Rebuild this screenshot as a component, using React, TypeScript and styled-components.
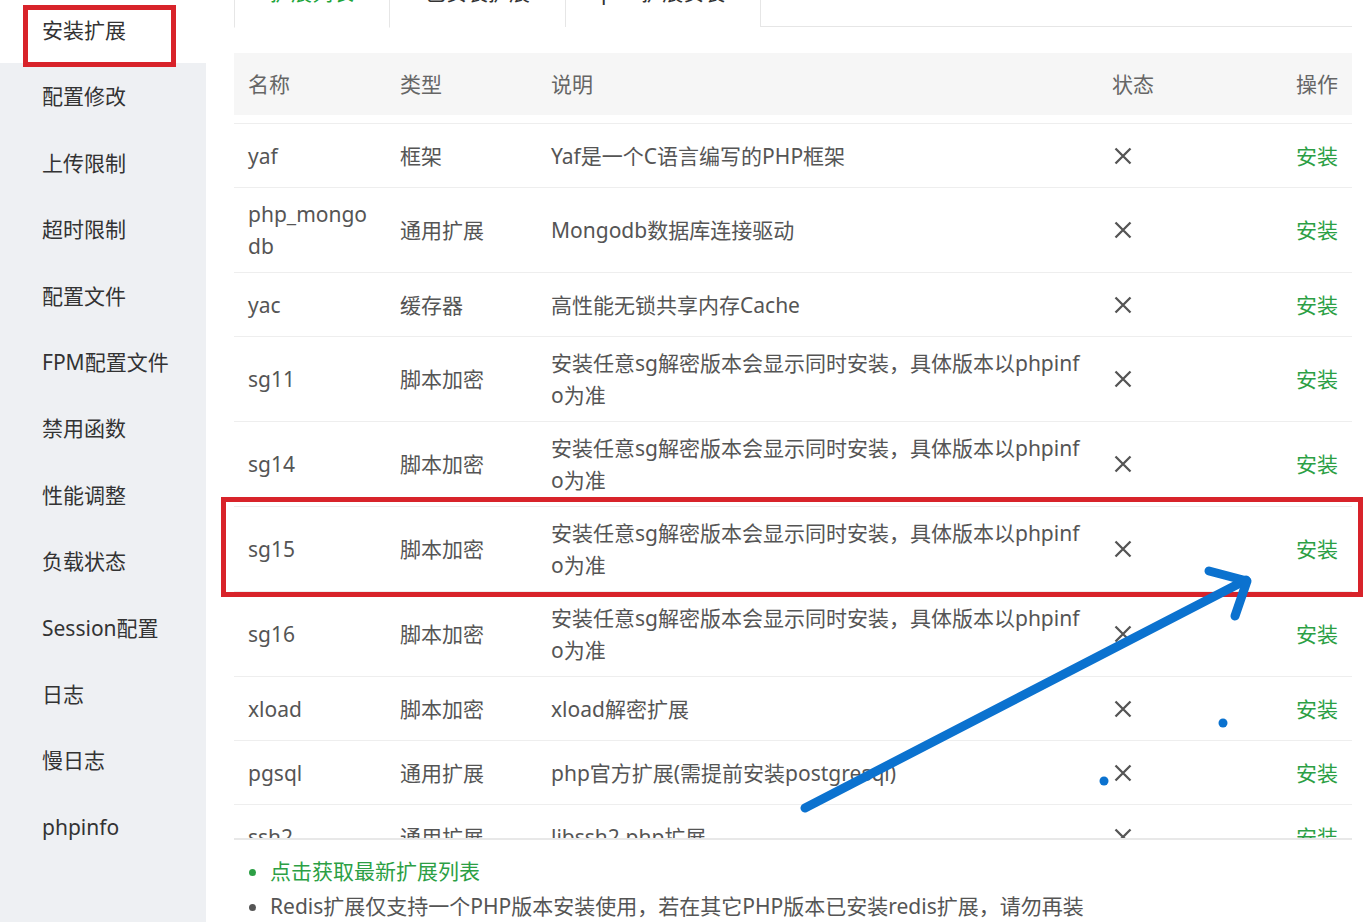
import styled, { createGlobalStyle } from "styled-components";

const GlobalStyle = createGlobalStyle`
  html, body {
    margin: 0;
    padding: 0;
    background: #fff;
  }
  body {
    font-family: "Noto Sans", "Noto Sans CJK SC", sans-serif;
  }
`;

const sideItems = [
  "安装扩展",
  "配置修改",
  "上传限制",
  "超时限制",
  "配置文件",
  "FPM配置文件",
  "禁用函数",
  "性能调整",
  "负载状态",
  "Session配置",
  "日志",
  "慢日志",
  "phpinfo",
];

const tabs = ["扩展列表", "已安装扩展", "pecl扩展安装"];

const sgDesc = "安装任意sg解密版本会显示同时安装，具体版本以phpinfo为准";

const rows = [
  { name: "yaf", type: "框架", desc: "Yaf是一个C语言编写的PHP框架" },
  { name: "php_mongodb", type: "通用扩展", desc: "Mongodb数据库连接驱动" },
  { name: "yac", type: "缓存器", desc: "高性能无锁共享内存Cache" },
  { name: "sg11", type: "脚本加密", desc: sgDesc },
  { name: "sg14", type: "脚本加密", desc: sgDesc },
  { name: "sg15", type: "脚本加密", desc: sgDesc },
  { name: "sg16", type: "脚本加密", desc: sgDesc },
  { name: "xload", type: "脚本加密", desc: "xload解密扩展" },
  { name: "pgsql", type: "通用扩展", desc: "php官方扩展(需提前安装postgresql)" },
  { name: "ssh2", type: "通用扩展", desc: "libssh2.php扩展" },
];

function CrossIcon() {
  return (
    <svg width="18" height="18" viewBox="0 0 18 18">
      <path d="M1.5 1.5 L16.5 16.5 M16.5 1.5 L1.5 16.5" stroke="#555" strokeWidth="2.3" />
    </svg>
  );
}

export default function App() {
  return (
    <Page>
      <GlobalStyle />
      <Sidebar>
        {sideItems.map((item, i) => (
          <SideItem key={item} $active={i === 0}>
            {item}
          </SideItem>
        ))}
      </Sidebar>
      <Main>
        <TabBar>
          {tabs.map((t, i) => (
            <Tab key={t} $active={i === 0}>
              {t}
            </Tab>
          ))}
        </TabBar>
        <HeadRow>
          <Cell>名称</Cell>
          <Cell>类型</Cell>
          <Cell>说明</Cell>
          <Cell>状态</Cell>
          <OpCell>操作</OpCell>
        </HeadRow>
        <BodyWrap>
          {rows.map((r) => (
            <Row key={r.name}>
              <Cell>{r.name}</Cell>
              <Cell>{r.type}</Cell>
              <DescCell>{r.desc}</DescCell>
              <StatusCell>
                <CrossIcon />
              </StatusCell>
              <OpCell>
                <InstallLink>安装</InstallLink>
              </OpCell>
            </Row>
          ))}
        </BodyWrap>
        <Notes>
          <Note $green>点击获取最新扩展列表</Note>
          <Note>Redis扩展仅支持一个PHP版本安装使用，若在其它PHP版本已安装redis扩展，请勿再装</Note>
        </Notes>
      </Main>
      <Overlay width="1369" height="922" viewBox="0 0 1369 922">
        <rect x="25.5" y="7.5" width="148" height="57" fill="none" stroke="#d8232a" strokeWidth="5" />
        <rect x="223.5" y="499.5" width="1137" height="95" fill="none" stroke="#d8232a" strokeWidth="5" />
        <g stroke="#0b72cf" strokeWidth="9" strokeLinecap="round" strokeLinejoin="round" fill="none">
          <path d="M805 808 L1246 580" />
          <path d="M1209 571 L1247 581 L1235 616" />
        </g>
        <circle cx="1223" cy="723" r="4.5" fill="#0b72cf" />
        <circle cx="1104" cy="781" r="4.5" fill="#0b72cf" />
      </Overlay>
    </Page>
  );
}

const Page = styled.div`
  position: relative;
  display: flex;
  width: 1369px;
  height: 922px;
  overflow: hidden;
  background: #fff;
`;

const Sidebar = styled.div`
  width: 206px;
  flex-shrink: 0;
  background: #eef0f3;
  margin-top: -3px;
`;

const SideItem = styled.div<{ $active?: boolean }>`
  height: 66.4px;
  line-height: 66.4px;
  padding-left: 42px;
  font-size: 21px;
  color: #333;
  background: ${(p) => (p.$active ? "#fff" : "transparent")};
  white-space: nowrap;
`;

const Main = styled.div`
  margin-left: 28px;
  width: 1118px;
  flex-shrink: 0;
`;

const TabBar = styled.div`
  display: flex;
  height: 62px;
  margin-top: -36px;
  border-bottom: 1px solid #e6e6e6;
  margin-bottom: 26px;
`;

const Tab = styled.div<{ $active?: boolean }>`
  height: 62px;
  padding: 0 35px;
  line-height: 55px;
  font-size: 21px;
  white-space: nowrap;
  color: ${(p) => (p.$active ? "#20a53a" : "#333")};
  border: 1px solid #e6e6e6;
  border-left-width: ${(p) => (p.$active ? "1px" : "0")};
  border-bottom: ${(p) => (p.$active ? "1px solid #fff" : "none")};
  background: #fff;
`;

const columns = "152px 151px 561px 152px 102px";

const HeadRow = styled.div`
  display: grid;
  grid-template-columns: ${columns};
  align-items: center;
  height: 62px;
  background: #f6f6f6;
  color: #666;
  font-size: 21px;
  margin-bottom: 8px;
`;

const BodyWrap = styled.div`
  height: 714px;
  overflow: hidden;
  border-top: 1px solid #eee;
  border-bottom: 2px solid #e8e8e8;
`;

const Row = styled.div`
  display: grid;
  grid-template-columns: ${columns};
  align-items: center;
  min-height: 63px;
  border-bottom: 1px solid #eee;
  color: #555;
  font-size: 21px;
`;

const Cell = styled.div`
  padding: 10px 14px;
  line-height: 32px;
  word-break: break-all;
`;

const DescCell = styled(Cell)`
  padding-right: 15px;
`;

const StatusCell = styled(Cell)`
  display: flex;
  align-items: center;
  padding-top: 17px;
  padding-bottom: 17px;
  svg {
    margin-left: 2px;
  }
`;

const OpCell = styled(Cell)`
  text-align: right;
`;

const InstallLink = styled.span`
  color: #2c9f45;
  cursor: pointer;
`;

const Notes = styled.ul`
  margin: 14px 0 0;
  padding-left: 36px;
  font-size: 21px;
  line-height: 35px;
`;

const Note = styled.li<{ $green?: boolean }>`
  color: ${(p) => (p.$green ? "#2c9f45" : "#555")};
  white-space: nowrap;
`;

const Overlay = styled.svg`
  position: absolute;
  left: 0;
  top: 0;
  pointer-events: none;
`;
